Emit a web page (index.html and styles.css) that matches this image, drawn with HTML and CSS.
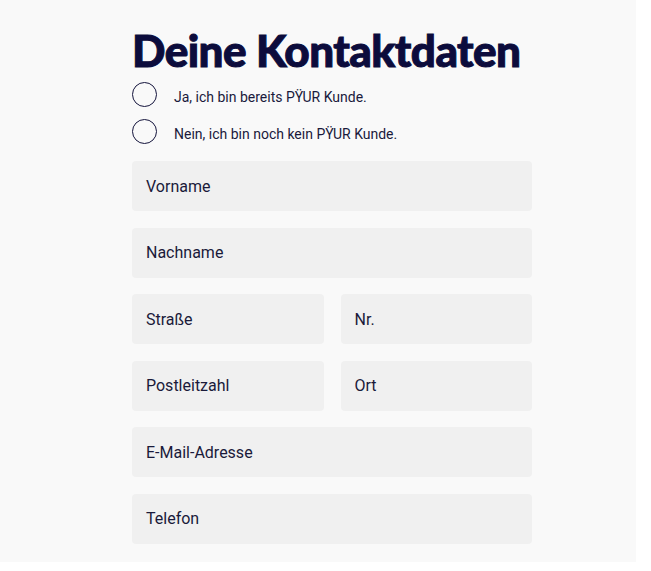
FILE: index.html
```html
<!DOCTYPE html>
<html lang="de">
<head>
<meta charset="utf-8">
<link rel="stylesheet" href="styles.css">
</head>
<body>
<div class="panel">
  <form class="form">
    <h1 class="title">Deine Kontaktdaten</h1>
    <div class="radios">
      <label class="radio"><span class="circle"></span><span class="rlabel">Ja, ich bin bereits PŸUR Kunde.</span></label>
      <label class="radio"><span class="circle"></span><span class="rlabel">Nein, ich bin noch kein PŸUR Kunde.</span></label>
    </div>
    <div class="fields">
      <div class="field">Vorname</div>
      <div class="field">Nachname</div>
      <div class="row">
        <div class="field">Straße</div>
        <div class="field">Nr.</div>
      </div>
      <div class="row">
        <div class="field">Postleitzahl</div>
        <div class="field">Ort</div>
      </div>
      <div class="field">E-Mail-Adresse</div>
      <div class="field">Telefon</div>
    </div>
  </form>
</div>
</body>
</html>
```

FILE: styles.css
```css
html, body {
  margin: 0;
  padding: 0;
  background: #ffffff;
}
.panel {
  width: 636px;
  height: 562px;
  background: #f9f9f9;
  box-sizing: border-box;
  padding: 26px 0 0 132px;
}
.form {
  width: 400px;
}
.title {
  margin: 0;
  font-family: "Lato", sans-serif;
  font-weight: 900;
  font-size: 44px;
  line-height: 48px;
  color: #0c0c3c;
  letter-spacing: -0.55px;
  -webkit-text-stroke: 1px #0c0c3c;
}
.radios {
  display: flex;
  flex-direction: column;
  gap: 12px;
  margin-top: 8px;
}
.radio {
  display: flex;
  align-items: center;
  height: 25px;
}
.circle {
  width: 23px;
  height: 23px;
  border: 1px solid #14143c;
  border-radius: 50%;
  flex: none;
}
.rlabel {
  margin-left: 17px;
  padding-top: 4px;
  font-family: "Roboto", sans-serif;
  font-size: 14px;
  color: #1a1a3c;
}
.fields {
  display: flex;
  flex-direction: column;
  gap: 16.6px;
  margin-top: 17px;
}
.row {
  display: grid;
  grid-template-columns: 1fr 1fr;
  gap: 17px;
}
.field {
  height: 50px;
  background: #f0f0f0;
  border-radius: 4px;
  box-sizing: border-box;
  padding-left: 14px;
  display: flex;
  align-items: center;
  font-family: "Roboto", sans-serif;
  font-size: 16px;
  color: #1a1a3a;
}
```
